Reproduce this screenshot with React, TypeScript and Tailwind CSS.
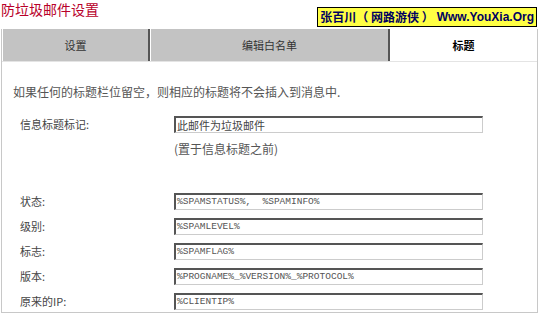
import React from "react";

const cjk = { fontFamily: '"SimSun","Noto Sans CJK SC","Noto Sans",sans-serif' };
const mono = { fontFamily: '"Liberation Mono","DejaVu Sans Mono",monospace' };

function Row({ label, value, last, cjkValue }: { label: string; value: string; last?: boolean; cjkValue?: boolean }) {
  return (
    <div className={`flex items-center h-[17px] ${last ? "" : "mb-[8px]"}`}>
      <div className="w-[172px] pl-[18px] text-[11px] text-[#444]" style={cjk}>{label}</div>
      <div
        className={`w-[309px] h-[17px] border-t-2 border-l-2 border-t-[#555] border-l-[#555] border-r border-b border-r-[#ccc] border-b-[#ccc] bg-white flex items-center pl-[1px] whitespace-pre ${cjkValue ? "text-[11px] text-[#444]" : "text-[9.5px] text-[#555]"}`}
        style={cjkValue ? cjk : mono}
      >
        {value}
      </div>
    </div>
  );
}

export default function App() {
  return (
    <div className="w-[539px] h-[316px] bg-white overflow-hidden relative">
      <div className="flex justify-between items-start h-[29px]">
        <div className="text-[14px] leading-[16px] text-[#b8002a] pl-[1px] pt-[1px]" style={cjk}>防垃圾邮件设置</div>
        <div className="mt-[7px] mr-[2px] h-[20px] px-[2px] bg-[#ffff44] border border-black flex items-center text-[12px] font-bold text-[#000060] whitespace-nowrap">
          <span style={cjk}>张百川（ 网路游侠 ）</span>
          <span className="ml-[3px]" style={{ fontFamily: '"Liberation Sans",Arial,sans-serif' }}>Www.YouXia.Org</span>
        </div>
      </div>
      <div className="ml-[1px] mr-[1px] h-[284px] border-l border-r border-b border-[#c8c8c8]">
        <div className="flex h-[33px] border-b border-[#e4e4e4]">
          <div className="w-[145px] ml-[1px] bg-[#c3c3c3] flex items-center justify-center text-[11px] text-[#333]" style={cjk}>设置</div>
          <div className="w-[2px] bg-[#555]"></div>
          <div className="w-[1px] bg-white"></div>
          <div className="w-[237px] bg-[#c3c3c3] flex items-center justify-center text-[11px] text-[#333]" style={cjk}>编辑白名单</div>
          <div className="w-[2px] bg-[#555]"></div>
          <div className="flex-1 bg-white flex items-center justify-center text-[11px] font-bold text-black" style={cjk}>标题</div>
        </div>
        <div className="pl-[11px] pt-[23px] text-[12px] leading-[14px] text-[#555]" style={cjk}>
          如果任何的标题栏位留空，则相应的标题将不会插入到消息中.
        </div>
        <div className="mt-[17px]">
          <Row label="信息标题标记:" value="此邮件为垃圾邮件" last cjkValue />
          <div className="pl-[172px] mt-[9px] text-[12px] leading-[14px] text-[#555]" style={cjk}>(置于信息标题之前)</div>
        </div>
        <div className="mt-[37px]">
          <Row label="状态:" value="%SPAMSTATUS%,  %SPAMINFO%" />
          <Row label="级别:" value="%SPAMLEVEL%" />
          <Row label="标志:" value="%SPAMFLAG%" />
          <Row label="版本:" value="%PROGNAME%_%VERSION%_%PROTOCOL%" />
          <Row label="原来的IP:" value="%CLIENTIP%" last />
        </div>
      </div>
    </div>
  );
}
